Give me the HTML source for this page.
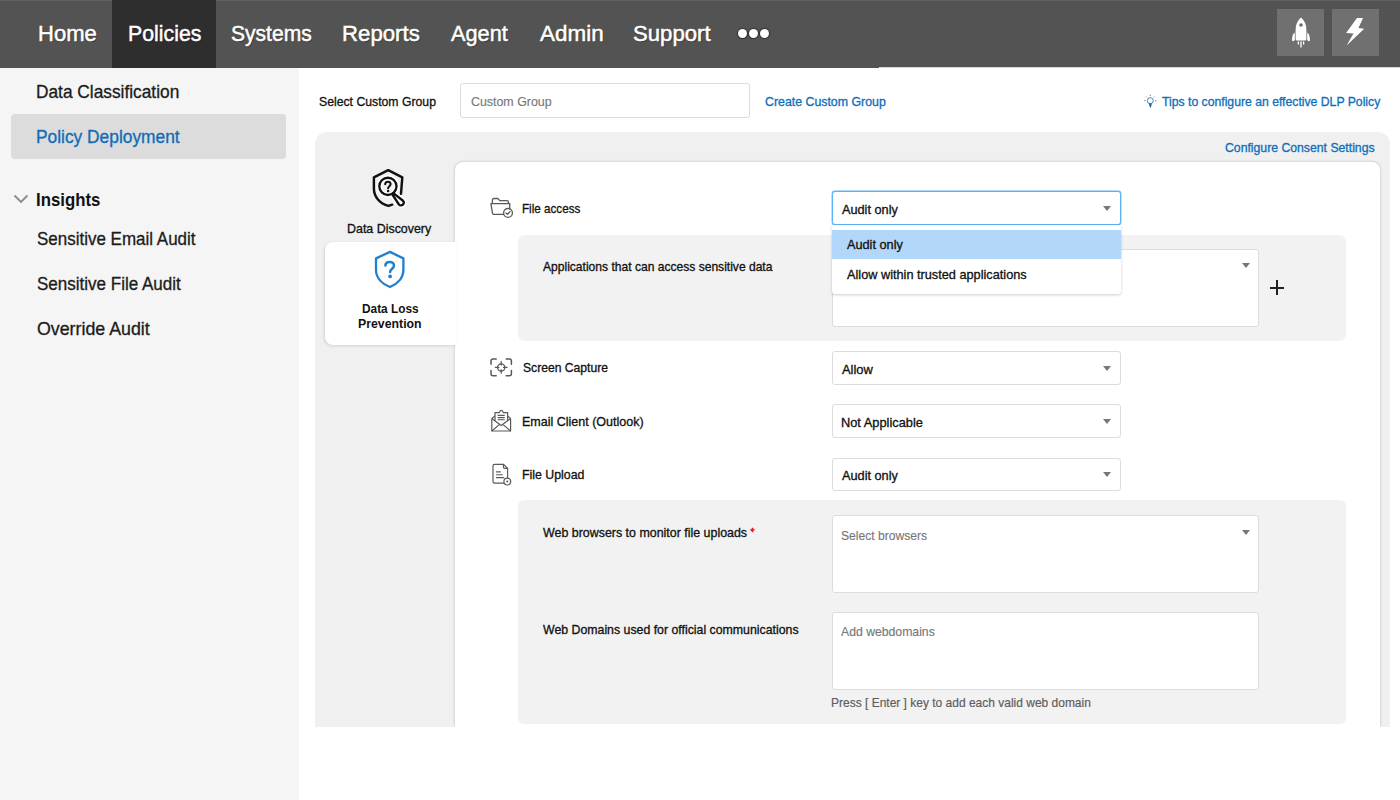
<!DOCTYPE html>
<html><head><meta charset="utf-8"><style>
*{margin:0;padding:0;box-sizing:border-box}
html,body{width:1400px;height:800px;overflow:hidden;background:#fff;font-family:"Liberation Sans",sans-serif}
.a{position:absolute}
.t{position:absolute;white-space:nowrap;line-height:1;transform-origin:0 0;font-family:"Liberation Sans",sans-serif}
.hdr{left:0;top:0;width:1400px;height:68px;background:#535353}
.act{left:112px;top:0;width:104px;height:68px;background:#2e2e2e}
.hb{top:9px;width:47px;height:47px;background:#707070}
.side{left:0;top:68px;width:299px;height:732px;background:#f5f5f5}
.sel{left:11px;top:114px;width:275px;height:45px;background:#dcdcdc;border-radius:4px}
.inp{background:#fff;border:1px solid #dcdcdc;border-radius:3px}
.panel{left:315px;top:132px;width:1075px;height:595px;background:#f0f0f0;border-radius:12px 12px 0 0;overflow:hidden}
.card{left:455px;top:162px;width:925px;height:565px;background:#fff;border-radius:8px 8px 0 0;box-shadow:0 0 3px rgba(0,0,0,.24)}
.tab{left:325px;top:242px;width:131px;height:103px;background:#fff;border-radius:8px 0 0 8px;box-shadow:-1px 1px 3px rgba(0,0,0,.12)}
.sub{background:#f2f2f2;border-radius:6px}
.arr{width:0;height:0;border-left:4px solid transparent;border-right:4px solid transparent;border-top:5px solid #777}

</style></head><body>
<div class="a hdr"></div>
<div class="a" style="left:0;top:0;width:1400px;height:1px;background:#626262"></div>
<div class="a act"></div>
<div class="a" style="left:879px;top:67px;width:521px;height:1px;background:#d8d8d8"></div>
<div class="a" style="left:738px;top:29px;width:9px;height:9px;border-radius:50%;background:#fff;box-shadow:0 0 1px 1px rgba(0,0,0,.4)"></div>
<div class="a" style="left:749px;top:29px;width:9px;height:9px;border-radius:50%;background:#fff;box-shadow:0 0 1px 1px rgba(0,0,0,.4)"></div>
<div class="a" style="left:760px;top:29px;width:9px;height:9px;border-radius:50%;background:#fff;box-shadow:0 0 1px 1px rgba(0,0,0,.4)"></div>
<div class="a hb" style="left:1277px"></div>
<div class="a hb" style="left:1332px"></div>
<div class="a side"></div>
<div class="a sel"></div>
<svg class="a" style="left:12px;top:192px" width="18" height="14" viewBox="0 0 18 14"><path d="M2.5 3.5 L9 10 L15.5 3.5" fill="none" stroke="#8c8c8c" stroke-width="1.9"/></svg>
<div class="a inp" style="left:460px;top:83px;width:290px;height:35px"></div>
<div class="a panel"></div>
<div class="a card"></div>
<div class="a tab"></div>
<div class="a sub" style="left:518px;top:235px;width:828px;height:106px"></div>
<div class="a sub" style="left:518px;top:500px;width:828px;height:224px"></div>
<div class="a inp" style="left:832px;top:249px;width:427px;height:78px"></div>
<div class="a arr" style="left:1242px;top:263px"></div>
<div class="a" style="left:1270px;top:286.5px;width:14px;height:2px;background:#222"></div>
<div class="a" style="left:1276px;top:280px;width:2px;height:15px;background:#222"></div>
<div class="a inp" style="left:832px;top:191px;width:289px;height:34px;border-color:#5ab4f6;box-shadow:0 0 0 0.4px #5ab4f6"></div>
<div class="a arr" style="left:1103px;top:206px"></div>
<div class="a" style="left:832px;top:225px;width:289px;height:69px;background:#fff;border-radius:0 0 3px 3px;box-shadow:0 1px 3px rgba(0,0,0,.2)"></div>
<div class="a" style="left:832px;top:230px;width:289px;height:29px;background:#b3d7fa"></div>
<div class="a inp" style="left:832px;top:351px;width:289px;height:34px"></div>
<div class="a arr" style="left:1103px;top:365.5px"></div>
<div class="a inp" style="left:832px;top:404px;width:289px;height:34px"></div>
<div class="a arr" style="left:1103px;top:419px"></div>
<div class="a inp" style="left:832px;top:458px;width:289px;height:33px"></div>
<div class="a arr" style="left:1103px;top:472px"></div>
<div class="a inp" style="left:832px;top:515px;width:427px;height:78px"></div>
<div class="a arr" style="left:1242px;top:529.5px"></div>
<div class="a inp" style="left:832px;top:612px;width:427px;height:78px"></div>

<svg class="a" style="left:366px;top:164px" width="46" height="48" viewBox="0 0 46 48" fill="none" stroke-linecap="round" stroke-linejoin="round">
<path d="M35 29.8 L36.3 13.4 L22.2 6.2 L7.9 13.4 V24.5 C7.9 33 13.8 39.5 22.5 41.9 L26.2 40.7" stroke="#111" stroke-width="2.45"/>
<g stroke="#fff" stroke-width="5.5"><circle cx="21.9" cy="22.35" r="8.6"/><path d="M28.23 29.82 L37.06 36.7 A2.8 2.8 0 0 1 32.94 40.5 L26.77 31.18 Z"/></g>
<g stroke="#111" stroke-width="2.35"><circle cx="21.9" cy="22.35" r="8.6"/><path d="M28.23 29.82 L37.06 36.7 A2.8 2.8 0 0 1 32.94 40.5 L26.77 31.18"/></g>
<path d="M19.2 20.3 C19.2 18.7 20.4 17.7 21.9 17.7 C23.5 17.7 24.6 18.8 24.6 20.1 C24.6 22 22.1 22.3 22.1 24.3" stroke="#111" stroke-width="2"/>
<circle cx="22.1" cy="27.1" r="1.25" fill="#111"/>
</svg>
<svg class="a" style="left:366px;top:246px" width="46" height="48" viewBox="0 0 46 48" fill="none" stroke="#1f7fd0" stroke-width="2.3" stroke-linecap="round" stroke-linejoin="round">
<path d="M24 5.9 L37.4 12.4 V24 C37.4 32 31.5 38 24 41 C16.5 38 10 32 10 24 V12.4 Z"/>
<path d="M19.4 19.6 C19.4 17.2 21.4 15.9 23.8 15.9 C26.3 15.9 28 17.6 28 19.6 C28 22.6 24.1 22.8 24.1 26" stroke-width="2.5"/>
<circle cx="24.1" cy="30.4" r="1.9" fill="#1f7fd0" stroke="none"/>
</svg>
<svg class="a" style="left:486px;top:194px" width="32" height="28" viewBox="0 0 32 28" fill="none" stroke="#5a5a5a" stroke-width="1.3" stroke-linecap="round" stroke-linejoin="round">
<path d="M6.4 9.4 V6 Q6.4 4.5 8 4.5 H11.8 L13.9 6.6 H20.9 Q22.4 6.6 22.4 8.1 V9.4"/>
<path d="M23.6 14.6 L23.8 9.7 H4.9 L6.5 19.3 Q6.8 20.4 8 20.4 H17.6"/>
<circle cx="22" cy="18.9" r="4.4"/>
<path d="M19.9 18.9 L21.4 20.4 L24 17.6"/>
</svg>
<svg class="a" style="left:486px;top:354px" width="32" height="28" viewBox="0 0 32 28" fill="none" stroke="#5a5a5a" stroke-width="1.5" stroke-linecap="round" stroke-linejoin="round">
<path d="M5 10.3 V7.1 Q5 5.1 7 5.1 H10.2"/>
<path d="M20.2 5.1 H23.4 Q25.4 5.1 25.4 7.1 V10.3"/>
<path d="M5 16.5 V19.7 Q5 21.7 7 21.7 H10.2"/>
<path d="M20.2 21.7 H23.4 Q25.4 21.7 25.4 19.7 V16.5"/>
<circle cx="15.2" cy="13.4" r="3.6" stroke-width="1.3"/>
<path d="M15.2 7.6 V11 M15.2 15.8 V19.2 M9.4 13.4 H12.8 M17.6 13.4 H21" stroke-width="1.3"/>
</svg>
<svg class="a" style="left:486px;top:406px" width="32" height="30" viewBox="0 0 32 30" fill="none" stroke="#5a5a5a" stroke-width="1.2" stroke-linejoin="round">
<path d="M5.8 12.5 V25 H24.6 V12.5"/>
<path d="M5.8 12.5 L9 10 M24.6 12.5 L21.6 10"/>
<path d="M5.8 12.5 L15.2 19.6 L24.6 12.5"/>
<path d="M5.8 25 L13.3 18.6 M24.6 25 L17.1 18.6"/>
<path d="M9 15 V6.6 H13.3 Q13.8 4.3 15.3 4.3 Q16.8 4.3 17.3 6.6 H21.6 V15"/>
<path d="M11.6 9.4 H18.7 M11.6 11.6 H18.7 M11.6 13.8 H18.7" stroke-width="1.1"/>
</svg>
<svg class="a" style="left:486px;top:460px" width="32" height="30" viewBox="0 0 32 30" fill="none" stroke="#5a5a5a" stroke-width="1.2" stroke-linecap="round" stroke-linejoin="round">
<path d="M21.6 18 V8.4 L17.4 4.3 H8.6 Q7 4.3 7 5.9 V21.5 Q7 23.1 8.6 23.1 H17.6"/>
<path d="M17.4 4.3 V7 Q17.4 8.4 18.8 8.4 H21.6"/>
<path d="M10.4 11.9 H14.4 M10.4 14.8 H16.5 M10.4 17.6 H17.7" stroke-width="1.1"/>
<circle cx="21.3" cy="21.6" r="3.4"/>
<circle cx="21.3" cy="21.4" r="1" fill="#5a5a5a" stroke="none"/>
</svg>
<svg class="a" style="left:1277px;top:9px" width="47" height="47" viewBox="0 0 47 47">
<path d="M24 8.6 C20.4 11.5 18.6 16 18.6 21 V30 Q18.6 31.5 20 31.5 H28 Q29.4 31.5 29.4 30 V21 C29.4 16 27.6 11.5 24 8.6 Z" fill="#fff"/>
<path d="M17.8 23.4 C15.7 24.8 14.9 28 15.1 31.3 Q15.3 32.7 16.6 32.1 L17.8 31.3 Z M30.2 23.4 C32.3 24.8 33.1 28 32.9 31.3 Q32.7 32.7 31.4 32.1 L30.2 31.3 Z" fill="#fff"/>
<circle cx="24" cy="16" r="1.8" fill="#6a6a6a"/>
<path d="M21.4 32.5 V35.6 M24 32.5 V38.4 M26.6 32.5 V35.6" stroke="#fff" stroke-width="1.3"/>
</svg>
<svg class="a" style="left:1332px;top:9px" width="47" height="47" viewBox="0 0 47 47">
<path d="M25 9.1 L31 9.1 L26.5 19 L32.2 19.8 L14.6 36.5 L21.5 24.5 L14.1 24 Z" fill="#fff"/>
</svg>
<svg class="a" style="left:1142px;top:92px" width="18" height="18" viewBox="0 0 18 18" fill="none" stroke="#3a74a8" stroke-width="0.9">
<circle cx="8.3" cy="8.7" r="3"/>
<path d="M6.7 11.3 L10 11.3 L8.9 15.4 L7.8 15.4 Z" fill="#2f6aa0" stroke="none"/>
<path d="M8.3 2.7 V3.9 M4 4.6 L4.7 5.3 M12.6 4.6 L11.9 5.3 M2.2 8.7 H3.4 M13.2 8.7 H14.4" stroke-width="0.9"/>
</svg>

<div class="a" style="left:299px;top:727px;width:1101px;height:73px;background:#fff"></div>
<svg class="a" style="left:749px;top:526px" width="7" height="8" viewBox="0 0 7 8"><path d="M3.5 1.8 V6.2 M1.6 2.9 L5.4 5.1 M5.4 2.9 L1.6 5.1" stroke="#e3191f" stroke-width="1.2"/></svg>

<div class="t" style="left:37.94px;top:22.02px;font-size:22.90px;font-weight:400;color:#ffffff;transform:scaleX(0.9624);text-shadow:1px 1px 1px rgba(0,0,0,.35);-webkit-text-stroke:0.5px #fff;">Home</div>
<div class="t" style="left:127.67px;top:22.02px;font-size:22.90px;font-weight:400;color:#ffffff;transform:scaleX(0.9311);text-shadow:1px 1px 1px rgba(0,0,0,.35);-webkit-text-stroke:0.5px #fff;">Policies</div>
<div class="t" style="left:231.08px;top:22.02px;font-size:22.90px;font-weight:400;color:#ffffff;transform:scaleX(0.9199);text-shadow:1px 1px 1px rgba(0,0,0,.35);-webkit-text-stroke:0.5px #fff;">Systems</div>
<div class="t" style="left:342.03px;top:22.02px;font-size:22.90px;font-weight:400;color:#ffffff;transform:scaleX(0.9707);text-shadow:1px 1px 1px rgba(0,0,0,.35);-webkit-text-stroke:0.5px #fff;">Reports</div>
<div class="t" style="left:450.60px;top:22.02px;font-size:22.90px;font-weight:400;color:#ffffff;transform:scaleX(0.9494);text-shadow:1px 1px 1px rgba(0,0,0,.35);-webkit-text-stroke:0.5px #fff;">Agent</div>
<div class="t" style="left:540.00px;top:22.02px;font-size:22.90px;font-weight:400;color:#ffffff;transform:scaleX(0.9805);text-shadow:1px 1px 1px rgba(0,0,0,.35);-webkit-text-stroke:0.5px #fff;">Admin</div>
<div class="t" style="left:632.73px;top:22.02px;font-size:22.90px;font-weight:400;color:#ffffff;transform:scaleX(0.9673);text-shadow:1px 1px 1px rgba(0,0,0,.35);-webkit-text-stroke:0.5px #fff;">Support</div>
<div class="t" style="left:35.97px;top:83.06px;font-size:18.60px;font-weight:400;color:#1c1c1c;transform:scaleX(0.9303);-webkit-text-stroke:0.32px #1c1c1c;">Data Classification</div>
<div class="t" style="left:35.97px;top:128.06px;font-size:18.60px;font-weight:400;color:#0f6cb6;transform:scaleX(0.9329);-webkit-text-stroke:0.32px #0f6cb6;">Policy Deployment</div>
<div class="t" style="left:36.00px;top:190.86px;font-size:18.60px;font-weight:700;color:#111111;transform:scaleX(0.9022);">Insights</div>
<div class="t" style="left:36.50px;top:229.56px;font-size:18.60px;font-weight:400;color:#1c1c1c;transform:scaleX(0.9132);-webkit-text-stroke:0.32px #1c1c1c;">Sensitive Email Audit</div>
<div class="t" style="left:36.50px;top:274.56px;font-size:18.60px;font-weight:400;color:#1c1c1c;transform:scaleX(0.9154);-webkit-text-stroke:0.32px #1c1c1c;">Sensitive File Audit</div>
<div class="t" style="left:36.50px;top:319.56px;font-size:18.60px;font-weight:400;color:#1c1c1c;transform:scaleX(0.9567);-webkit-text-stroke:0.32px #1c1c1c;">Override Audit</div>
<div class="t" style="left:319.30px;top:94.71px;font-size:13.10px;font-weight:400;color:#111111;transform:scaleX(0.9344);-webkit-text-stroke:0.32px #111111;">Select Custom Group</div>
<div class="t" style="left:470.60px;top:95.21px;font-size:13.10px;font-weight:400;color:#777777;transform:scaleX(0.9463);-webkit-text-stroke:0.15px #777777;">Custom Group</div>
<div class="t" style="left:764.50px;top:95.21px;font-size:13.10px;font-weight:400;color:#0b6fbb;transform:scaleX(0.9429);-webkit-text-stroke:0.32px #0b6fbb;">Create Custom Group</div>
<div class="t" style="left:1161.70px;top:95.21px;font-size:13.10px;font-weight:400;color:#0b6fbb;transform:scaleX(0.9323);-webkit-text-stroke:0.32px #0b6fbb;">Tips to configure an effective DLP Policy</div>
<div class="t" style="left:1224.60px;top:141.21px;font-size:13.10px;font-weight:400;color:#0b6fbb;transform:scaleX(0.9341);-webkit-text-stroke:0.32px #0b6fbb;">Configure Consent Settings</div>
<div class="t" style="left:346.55px;top:221.91px;font-size:13.10px;font-weight:400;color:#111111;transform:scaleX(0.9487);-webkit-text-stroke:0.32px #111111;">Data Discovery</div>
<div class="t" style="left:361.80px;top:302.21px;font-size:13.10px;font-weight:700;color:#111111;transform:scaleX(0.9053);">Data Loss</div>
<div class="t" style="left:358.20px;top:316.61px;font-size:13.10px;font-weight:700;color:#111111;transform:scaleX(0.9399);">Prevention</div>
<div class="t" style="left:521.61px;top:201.81px;font-size:13.10px;font-weight:400;color:#111111;transform:scaleX(0.8900);-webkit-text-stroke:0.32px #111111;">File access</div>
<div class="t" style="left:841.75px;top:202.66px;font-size:13.10px;font-weight:400;color:#111111;transform:scaleX(0.9706);-webkit-text-stroke:0.32px #111111;">Audit only</div>
<div class="t" style="left:847.00px;top:238.21px;font-size:13.10px;font-weight:400;color:#111111;transform:scaleX(0.9706);-webkit-text-stroke:0.32px #111111;">Audit only</div>
<div class="t" style="left:847.10px;top:268.21px;font-size:13.10px;font-weight:400;color:#111111;transform:scaleX(0.9719);-webkit-text-stroke:0.32px #111111;">Allow within trusted applications</div>
<div class="t" style="left:542.60px;top:259.91px;font-size:13.10px;font-weight:400;color:#111111;transform:scaleX(0.9217);-webkit-text-stroke:0.32px #111111;">Applications that can access sensitive data</div>
<div class="t" style="left:522.50px;top:361.21px;font-size:13.10px;font-weight:400;color:#111111;transform:scaleX(0.9264);-webkit-text-stroke:0.32px #111111;">Screen Capture</div>
<div class="t" style="left:841.70px;top:362.81px;font-size:13.10px;font-weight:400;color:#111111;transform:scaleX(0.9864);-webkit-text-stroke:0.32px #111111;">Allow</div>
<div class="t" style="left:521.75px;top:414.61px;font-size:13.10px;font-weight:400;color:#111111;transform:scaleX(0.9549);-webkit-text-stroke:0.32px #111111;">Email Client (Outlook)</div>
<div class="t" style="left:840.72px;top:415.71px;font-size:13.10px;font-weight:400;color:#111111;transform:scaleX(0.9778);-webkit-text-stroke:0.32px #111111;">Not Applicable</div>
<div class="t" style="left:521.76px;top:467.91px;font-size:13.10px;font-weight:400;color:#111111;transform:scaleX(0.9423);-webkit-text-stroke:0.32px #111111;">File Upload</div>
<div class="t" style="left:841.70px;top:468.91px;font-size:13.10px;font-weight:400;color:#111111;transform:scaleX(0.9714);-webkit-text-stroke:0.32px #111111;">Audit only</div>
<div class="t" style="left:542.50px;top:526.41px;font-size:13.10px;font-weight:400;color:#111111;transform:scaleX(0.9484);-webkit-text-stroke:0.32px #111111;">Web browsers to monitor file uploads</div>
<div class="t" style="left:840.50px;top:528.51px;font-size:13.10px;font-weight:400;color:#777777;transform:scaleX(0.9242);-webkit-text-stroke:0.15px #777777;">Select browsers</div>
<div class="t" style="left:542.50px;top:623.41px;font-size:13.10px;font-weight:400;color:#111111;transform:scaleX(0.9407);-webkit-text-stroke:0.32px #111111;">Web Domains used for official communications</div>
<div class="t" style="left:840.50px;top:624.91px;font-size:13.10px;font-weight:400;color:#777777;transform:scaleX(0.9336);-webkit-text-stroke:0.15px #777777;">Add webdomains</div>
<div class="t" style="left:831.38px;top:695.91px;font-size:13.10px;font-weight:400;color:#5e5e5e;transform:scaleX(0.9155);-webkit-text-stroke:0.20px #5e5e5e;">Press [ Enter ] key to add each valid web domain</div>
</body></html>
